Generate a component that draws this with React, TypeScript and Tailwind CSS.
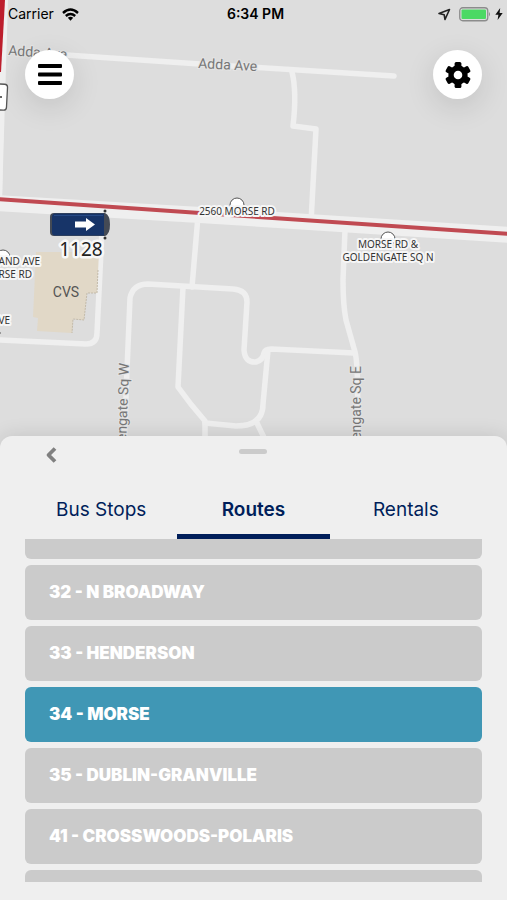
import { useLayoutEffect, useRef, useState } from "react";

const TABS = ["Bus Stops", "Routes", "Rentals"];

const ROUTES = [
  { id: "prev", name: "" },
  { id: "32", name: "32 - N BROADWAY" },
  { id: "33", name: "33 - HENDERSON" },
  { id: "34", name: "34 - MORSE" },
  { id: "35", name: "35 - DUBLIN-GRANVILLE" },
  { id: "41", name: "41 - CROSSWOODS-POLARIS" },
  { id: "next", name: "" },
];

function StreetMap() {
  return (
    <svg
      className="absolute inset-0 h-full w-full"
      viewBox="0 0 507 448"
      preserveAspectRatio="xMidYMid slice"
      role="img"
      aria-label="Map"
    >
      {/* streets */}
      <g fill="none" stroke="#efefef" strokeWidth="5.5" strokeLinecap="round" strokeLinejoin="round">
        <path d="M-4 0 L-8 200" strokeWidth="20" />
        <path d="M5 0 L-1 200" strokeWidth="6" />
        <path d="M66 55 L200 64 L394 76" />
        <path d="M292 72 Q297 92 293 126 L316 129 L311 222" />
        <path d="M198 216 L192 287" />
        <path d="M345 230 L343 280 Q343 305 346 320 L355 352 Q359 366 357 448" />
        <path d="M124 448 L127 370 L130 298 Q133 284 148 284 L233 289 Q247 290 247 302 L244 350 Q245 363 256 362 Q263 360 264 353 Q265 349 271 349 L354 353" />
        <path d="M183 287 L178 387 Q190 404 205 421 L205 448" />
        <path d="M205 423 L236 426 Q263 426 263 404 L268 350" />
        <path d="M256 421 L269 448" />
        <path d="M0 340 L86 344 Q97 344 97 333 L102 230" />
      </g>

      {/* CVS building */}
      <path
        d="M36 252 L99 252 L97 293 L87 293 L84 320 L73 319 L72 333 L37 331 L38 318 L33 317 Z"
        fill="#e1d8c7"
      />
      <path
        d="M98 270 L97 293 L87 293 L84 320 L73 319 L72 333"
        fill="none"
        stroke="#c3baa9"
        strokeWidth="1"
        strokeDasharray="2 1"
      />

      {/* Morse Rd and the highlighted route */}
      <path d="M-5 203 L200 215 L512 235" fill="none" stroke="#efefef" strokeWidth="16" />
      <path d="M-5 199 L200 213 L512 234" fill="none" stroke="#c04a52" strokeWidth="4" />
      <path d="M-8 0 H5 L1 72 H-8 Z" fill="#bd1e2d" />
      <rect x="-16" y="84" width="23" height="26" rx="3" fill="#fff" stroke="#555" strokeWidth="1.3" transform="rotate(3 0 97)" />
      <path d="M-2 97 H2" stroke="#333" strokeWidth="1.5" />

      {/* stop markers */}
      <g fill="#fff" stroke="#555" strokeWidth="1">
        <circle cx="237" cy="205" r="7" />
        <circle cx="388" cy="239" r="7" />
        <circle cx="3" cy="257" r="7" />
      </g>

      {/* street names */}
      <g
        fill="#777"
        stroke="#e4e4e4"
        strokeWidth="2"
        paintOrder="stroke"
        fontSize="14"
        fontFamily="Roboto, sans-serif"
      >
        <text transform="translate(8 55) rotate(4)">Adda Ave</text>
        <text transform="translate(198 68) rotate(3)">Adda Ave</text>
        <text transform="translate(129 363) rotate(-88)" textAnchor="end">engate Sq W</text>
        <text transform="translate(361 366) rotate(-90)" textAnchor="end">engate Sq E</text>
        <text x="66" y="297" textAnchor="middle" fill="#555" stroke="none">CVS</text>
      </g>

      {/* stop names */}
      <g
        fill="#333"
        stroke="#f6f6f6"
        strokeWidth="4"
        strokeLinejoin="round"
        paintOrder="stroke"
        fontSize="10"
        fontFamily="'Noto Sans', sans-serif"
      >
        <text x="237" y="215" textAnchor="middle">2560 MORSE RD</text>
        <text x="388" y="248" textAnchor="middle">MORSE RD &amp;</text>
        <text x="388" y="261" textAnchor="middle">GOLDENGATE SQ N</text>
        <text x="40" y="265" textAnchor="end">AND AVE</text>
        <text x="32" y="278" textAnchor="end">RSE RD</text>
        <text x="10" y="324" textAnchor="end">VE</text>
      </g>
      <path d="M-2 333 H1" stroke="#555" strokeWidth="1" />

      {/* vehicle */}
      <circle cx="105" cy="211" r="1.5" fill="#333" />
      <circle cx="105" cy="238" r="1.5" fill="#333" />
      <path d="M54 213 H105 Q110 215 110 224.5 Q110 234 105 236 H54 Q50 236 50 232 V217 Q50 213 54 213 Z" fill="#444a55" />
      <path d="M55 213.5 H104 V235.5 H55 Q52 235.5 52 232 V217 Q52 213.5 55 213.5 Z" fill="#173468" />
      <path d="M54 215.5 H103" stroke="#274a85" strokeWidth="1" />
      <path d="M75 221.5 H86 V218 L95 224.5 L86 231 V227.5 H75 Z" fill="#fff" />
      <text
        x="81"
        y="256"
        textAnchor="middle"
        fill="#222"
        stroke="#f8f8f8"
        strokeWidth="5"
        strokeLinejoin="round"
        paintOrder="stroke"
        fontSize="19"
        fontFamily="'Noto Sans', sans-serif"
      >
        1128
      </text>
    </svg>
  );
}

function StatusBar() {
  return (
    <div className="grid h-7 grid-cols-3 items-center pl-2 pr-1 text-sm text-black">
      <div className="flex items-center gap-2">
        <span>Carrier</span>
        <svg width="17" height="13" viewBox="0 0 17 13" fill="none" stroke="#000" strokeWidth="2.4">
          <path d="M1 5 Q8.5 -1.8 16 5" />
          <path d="M3.8 8 Q8.5 3.8 13.2 8" />
          <path d="M5.800 9.8 Q8.5 7.8 11.2 9.8 L8.5 12.7 Z" fill="#000" stroke="none" />
        </svg>
      </div>
      <span className="text-center font-semibold">6:34 PM</span>
      <div className="flex items-center justify-end gap-1">
        <svg width="14" height="13" viewBox="0 0 14 13" fill="none" stroke="#222" strokeWidth="1.6" strokeLinejoin="round">
          <path d="M12.5 1.5 L8 11.500 L7.2 6.8 L2 5.5 Z" />
        </svg>
        <svg className="ml-1" width="32" height="15" viewBox="0 0 32 15">
          <rect x="0.75" y="0.75" width="28" height="13" rx="3" fill="none" stroke="#8c8c8c" strokeWidth="1.3" />
          <rect x="2.5" y="2.5" width="24.5" height="9.5" rx="1" fill="#4cd964" />
          <path d="M30 5 Q32 7.2 30 9.5 Z" fill="#8c8c8c" />
        </svg>
        <svg width="8" height="12" viewBox="0 0 8 12" fill="#111">
          <path d="M5.2 0 L0.3 6.8 H3.4 L2.6 12 L7.7 5 H4.6 Z" />
        </svg>
      </div>
    </div>
  );
}

function GearIcon() {
  return (
    <svg width="26" height="26" viewBox="0 0 26 26">
      <circle cx="13" cy="13" r="9.7" fill="#000" />
      <rect x="9.6" y="0" width="6.800" height="26" rx="1.5" fill="#000" />
      <rect x="9.6" y="0" width="6.800" height="26" rx="1.5" fill="#000" transform="rotate(60 13 13)" />
      <rect x="9.6" y="0" width="6.800" height="26" rx="1.5" fill="#000" transform="rotate(120 13 13)" />
      <circle cx="13" cy="13" r="4.3" fill="#fff" />
    </svg>
  );
}

export default function App() {
  const [tab, setTab] = useState("Routes");
  const [route, setRoute] = useState("34");
  const listRef = useRef<HTMLUListElement>(null);

  // Bring the selected route to the middle of the list
  useLayoutEffect(() => {
    if (listRef.current) listRef.current.scrollTop = 35;
  }, []);

  return (
    <div className="flex h-screen flex-col overflow-hidden bg-[#dddddd] font-['Inter',sans-serif]">
      {/* Map */}
      <section className="relative -mb-3 min-h-0 flex-1">
        <StreetMap />
        <div className="relative">
          <StatusBar />
          <div className="flex justify-between px-[25px] pt-[22px]">
            <button
              type="button"
              aria-label="Menu"
              className="flex size-[49px] items-center justify-center rounded-full bg-white shadow-[0_8px_30px_rgba(0,0,0,0.12)]"
            >
              <svg width="24" height="21" viewBox="0 0 24 21" fill="#000">
                <rect y="0" width="24" height="4" rx="1" />
                <rect y="8.5" width="24" height="4" rx="1" />
                <rect y="17" width="24" height="4" rx="1" />
              </svg>
            </button>
            <button
              type="button"
              aria-label="Settings"
              className="flex size-[49px] items-center justify-center rounded-full bg-white shadow-[0_8px_30px_rgba(0,0,0,0.12)]"
            >
              <GearIcon />
            </button>
          </div>
        </div>
      </section>

      {/* Bottom sheet */}
      <section className="relative rounded-t-xl bg-[#efefef] px-[25px] pb-[18px] shadow-[0_0_20px_rgba(0,0,0,0.12)]">
        <div className="grid h-12 grid-cols-3 items-start">
          <button type="button" aria-label="Back" className="flex h-[38px] w-12 items-center pl-5">
            <svg width="12" height="16" viewBox="0 0 12 16" fill="none" stroke="#808080" strokeWidth="3.8">
              <path d="M10 1.5 L3.5 8 L10 14.5" strokeLinejoin="round" />
            </svg>
          </button>
          <div className="mt-[13px] h-[5px] w-7 justify-self-center rounded-sm bg-[#cbcbcb]" />
        </div>

        <div role="tablist" className="grid h-[55px] grid-cols-3">
          {TABS.map((name) => (
            <button
              key={name}
              type="button"
              role="tab"
              aria-selected={tab === name}
              onClick={() => setTab(name)}
              className={`border-b-[5px] pt-0.5 text-[19px] text-[#001e5a] ${
                tab === name ? "border-[#001e5a] font-semibold" : "border-transparent"
              }`}
            >
              {name}
            </button>
          ))}
        </div>

        <ul
          ref={listRef}
          className="flex h-[343px] flex-col gap-1.5 overflow-y-auto [scrollbar-width:none]"
        >
          {ROUTES.map((r) => (
            <li key={r.id} className="shrink-0">
              <button
                type="button"
                aria-label={r.name || "Route"}
                onClick={() => setRoute(r.id)}
                className={`block h-[55px] w-full rounded-md px-6 text-left text-[17px] font-black text-white ${
                  route === r.id ? "bg-[#4097b5]" : "bg-[#cbcbcb]"
                }`}
              >
                {r.name}
              </button>
            </li>
          ))}
        </ul>
      </section>
    </div>
  );
}
